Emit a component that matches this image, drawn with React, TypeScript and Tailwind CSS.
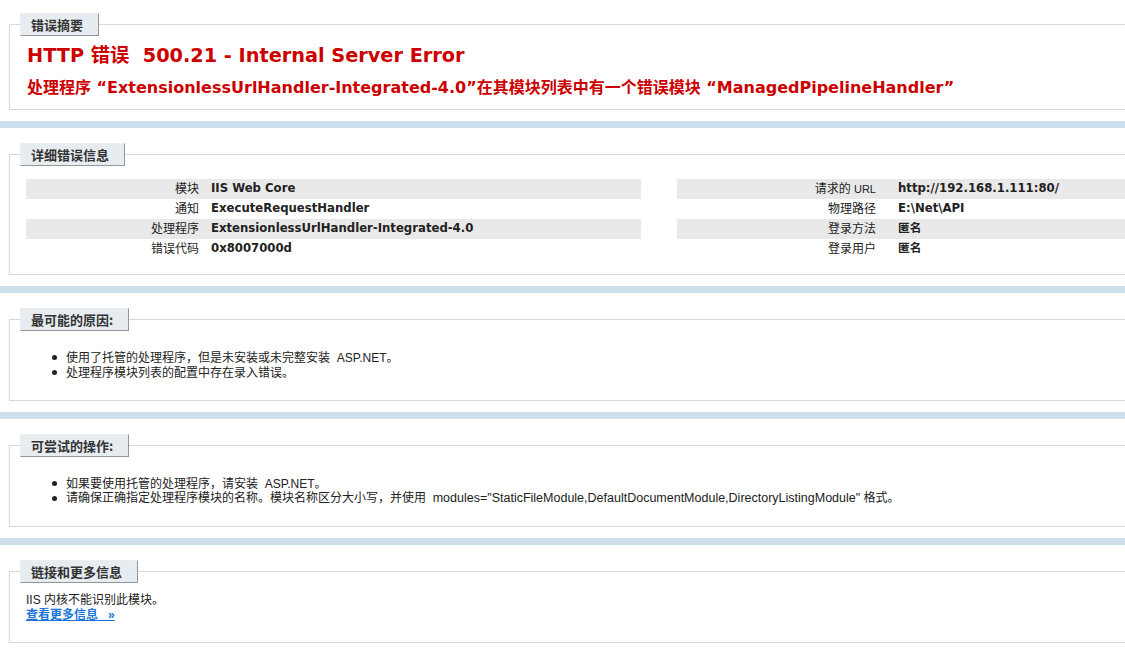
import React from "react";

function Tab({ children }: { children: React.ReactNode }) {
  return (
    <div className="relative -mt-[12px] ml-[10px] flex h-[23px] items-center self-start border border-t-[#ededed] border-l-[#ededed] border-r-[#969696] border-b-[#969696] bg-[#e7ecf0] pl-[10px] pr-[15px] font-['Noto_Sans_CJK_SC','DejaVu_Sans',sans-serif] text-[13px] font-bold leading-none text-[#333333]">
      {children}
    </div>
  );
}

function Panel({ first, children }: { first?: boolean; children: React.ReactNode }) {
  return (
    <div
      className={
        first
          ? "ml-[9px] mt-[24px] flex flex-col border-t border-l border-b border-[#d9d9d9]"
          : "ml-[9px] mt-[26px] flex flex-col border-t border-l border-b border-[#d9d9d9]"
      }
    >
      {children}
    </div>
  );
}

function Bar() {
  return <div className="mt-[11px] h-[7px] bg-[#cfe0ec]" />;
}

function LeftRow({ label, value, gray }: { label: string; value: string; gray?: boolean }) {
  return (
    <div className={gray ? "flex h-[20px] items-center bg-[#e9e9e9]" : "flex h-[20px] items-center"}>
      <div className="w-[185px] shrink-0 pr-[12px] text-right font-['Liberation_Sans','Noto_Sans_CJK_SC',sans-serif] text-[12px] text-[#222222]">
        {label}
      </div>
      <div className="whitespace-nowrap font-['DejaVu_Sans','Noto_Sans_CJK_SC',sans-serif] text-[11.7px] font-bold text-[#222222]">
        {value}
      </div>
    </div>
  );
}

function RightRow({ label, value, gray }: { label: React.ReactNode; value: string; gray?: boolean }) {
  return (
    <div className={gray ? "flex h-[20px] items-center bg-[#e9e9e9]" : "flex h-[20px] items-center"}>
      <div className="w-[221px] shrink-0 pr-[22px] text-right font-['Liberation_Sans','Noto_Sans_CJK_SC',sans-serif] text-[12px] text-[#222222]">
        {label}
      </div>
      <div className="whitespace-nowrap font-['DejaVu_Sans','Noto_Sans_CJK_SC',sans-serif] text-[11.7px] font-bold text-[#222222]">
        {value}
      </div>
    </div>
  );
}

function Bullet({ children }: { children: React.ReactNode }) {
  return (
    <div className="flex h-[15px] items-center whitespace-nowrap">
      <span className="ml-[42px] mr-[9px] h-[5px] w-[5px] shrink-0 rounded-full bg-[#222222]" />
      <span>{children}</span>
    </div>
  );
}

export default function App() {
  return (
    <div className="h-[656px] w-[1125px] overflow-hidden bg-white font-['Liberation_Sans','Noto_Sans_CJK_SC',sans-serif] text-[12px] text-[#222222]">
      <Panel first>
        <Tab>错误摘要</Tab>
        <div className="ml-[17px] mt-[8px] whitespace-nowrap font-['DejaVu_Sans','Noto_Sans_CJK_SC',sans-serif] text-[19.3px] font-bold leading-[24px] text-[#cc0000]">
          HTTP 错误&nbsp; 500.21 - Internal Server Error
        </div>
        <div className="mb-[11px] ml-[17px] mt-[10px] whitespace-nowrap font-['DejaVu_Sans','Noto_Sans_CJK_SC',sans-serif] text-[16px] font-bold leading-[20px] text-[#cc0000]">
          处理程序 “ExtensionlessUrlHandler-Integrated-4.0”在其模块列表中有一个错误模块 “ManagedPipelineHandler”
        </div>
      </Panel>
      <Bar />

      <Panel>
        <Tab>详细错误信息</Tab>
        <div className="mb-[15px] ml-[16px] mt-[13px] flex gap-[36px]">
          <div className="w-[615px] shrink-0">
            <LeftRow label="模块" value="IIS Web Core" gray />
            <LeftRow label="通知" value="ExecuteRequestHandler" />
            <LeftRow label="处理程序" value="ExtensionlessUrlHandler-Integrated-4.0" gray />
            <LeftRow label="错误代码" value="0x8007000d" />
          </div>
          <div className="w-[1105px] shrink-0">
            <RightRow
              label={
                <span>
                  请求的 <span className="text-[11px]">URL</span>
                </span>
              }
              value="http://192.168.1.111:80/"
              gray
            />
            <RightRow label="物理路径" value="E:\Net\API" />
            <RightRow label="登录方法" value="匿名" gray />
            <RightRow label="登录用户" value="匿名" />
          </div>
        </div>
      </Panel>
      <Bar />

      <Panel>
        <Tab>最可能的原因:</Tab>
        <div className="mb-[20px] mt-[19px]">
          <Bullet>使用了托管的处理程序，但是未安装或未完整安装&nbsp; ASP.NET。</Bullet>
          <Bullet>处理程序模块列表的配置中存在录入错误。</Bullet>
        </div>
      </Panel>
      <Bar />

      <Panel>
        <Tab>可尝试的操作:</Tab>
        <div className="mb-[20px] mt-[19px]">
          <Bullet>如果要使用托管的处理程序，请安装&nbsp; ASP.NET。</Bullet>
          <Bullet>
            请确保正确指定处理程序模块的名称。模块名称区分大小写，并使用&nbsp;{" "}
            <span className="text-[12.5px]">modules="StaticFileModule,DefaultDocumentModule,DirectoryListingModule"</span> 格式。
          </Bullet>
        </div>
      </Panel>
      <Bar />

      <Panel>
        <Tab>链接和更多信息</Tab>
        <div className="mb-[19px] ml-[16px] mt-[10px] leading-[15px]">
          <div>IIS 内核不能识别此模块。</div>
          <div>
            <a className="font-bold text-[#1a73d9] underline" href="#">
              查看更多信息&nbsp;&nbsp; »
            </a>
          </div>
        </div>
      </Panel>
    </div>
  );
}
